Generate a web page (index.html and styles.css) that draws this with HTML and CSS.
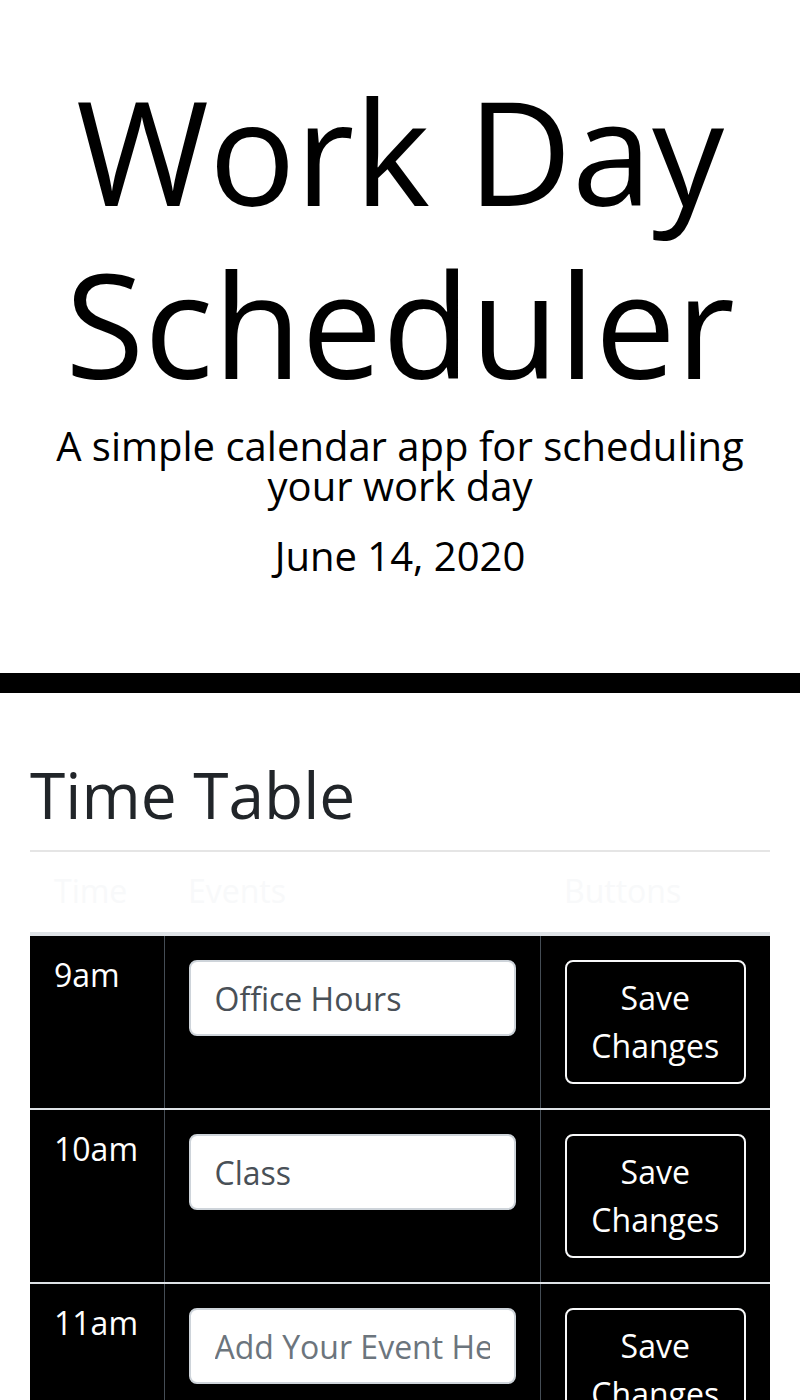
FILE: index.html
```html
<!DOCTYPE html>
<html lang="en">
<head>
<meta charset="utf-8">
<title>Work Day Scheduler</title>
<link rel="stylesheet" href="styles.css">
</head>
<body>
<header class="jumbotron">
  <h1 class="display-title">Work Day Scheduler</h1>
  <p class="lead">A simple calendar app for scheduling your work day</p>
  <p class="current-day">June 14, 2020</p>
</header>
<main class="container">
  <h2 class="section-title">Time Table</h2>
  <hr class="divider">
  <table class="schedule">
    <colgroup>
      <col class="col-time">
      <col class="col-events">
      <col class="col-buttons">
    </colgroup>
    <thead>
      <tr>
        <th>Time</th>
        <th>Events</th>
        <th>Buttons</th>
      </tr>
    </thead>
    <tbody>
      <tr>
        <td class="hour">9am</td>
        <td><input class="event-input" type="text" value="Office Hours" placeholder="Add Your Event Here"></td>
        <td><button class="save-btn" type="button">Save Changes</button></td>
      </tr>
      <tr>
        <td class="hour">10am</td>
        <td><input class="event-input" type="text" value="Class" placeholder="Add Your Event Here"></td>
        <td><button class="save-btn" type="button">Save Changes</button></td>
      </tr>
      <tr>
        <td class="hour">11am</td>
        <td><input class="event-input" type="text" value="" placeholder="Add Your Event Here"></td>
        <td><button class="save-btn" type="button">Save Changes</button></td>
      </tr>
      <tr>
        <td class="hour">12pm</td>
        <td><input class="event-input" type="text" value="" placeholder="Add Your Event Here"></td>
        <td><button class="save-btn" type="button">Save Changes</button></td>
      </tr>
    </tbody>
  </table>
</main>
</body>
</html>
```
FILE: styles.css
```css
* {
  box-sizing: border-box;
}

html, body {
  margin: 0;
  padding: 0;
}

body {
  font-family: "Open Sans", "Liberation Sans", sans-serif;
  font-size: 32px;
  line-height: 1.5;
  color: #212529;
  background: #ffffff;
}

.jumbotron {
  padding: 64px 32px 64px;
  margin-bottom: 64px;
  text-align: center;
  color: #000000;
  border-bottom: 20px solid #000000;
}

.display-title {
  margin: 0 0 16px;
  font-size: 144px;
  font-weight: 400;
  line-height: 1.2;
}

.lead {
  margin: 0 0 26px;
  font-size: 40px;
  font-weight: 400;
  line-height: 1;
}

.current-day {
  margin: 0 0 29px;
  font-size: 40px;
  font-weight: 400;
  line-height: 1.2;
}

.container {
  padding: 0 30px;
}

.section-title {
  margin: 0 0 17px;
  font-size: 64px;
  font-weight: 400;
  line-height: 1.2;
}

.divider {
  margin: 0;
  border: 0;
  border-top: 2px solid rgba(0, 0, 0, 0.1);
}

.schedule {
  width: 100%;
  table-layout: fixed;
  border-collapse: collapse;
}

.col-time { width: 134px; }
.col-events { width: 376px; }
.col-buttons { width: 230px; }

.schedule th {
  padding: 15px 24px 17px;
  text-align: left;
  font-weight: 400;
  color: #f8f9fa;
  border-bottom: 4px solid #dee2e6;
}

.schedule tbody tr {
  background: #000000;
  color: #ffffff;
  border-bottom: 2px solid #dee2e6;
}

.schedule td {
  padding: 24px;
  vertical-align: top;
  border-left: 1px solid #454d55;
}

.schedule td:first-child {
  border-left: 0;
}

.schedule td.hour {
  padding-top: 15px;
}

.event-input {
  display: block;
  width: 100%;
  height: 76px;
  padding: 12px 24px;
  font-family: inherit;
  font-size: 32px;
  line-height: 1.5;
  color: #495057;
  background: #ffffff;
  border: 2px solid #ced4da;
  border-radius: 8px;
}

.event-input::placeholder {
  color: #6c757d;
  opacity: 1;
}

.save-btn {
  display: block;
  width: 100%;
  padding: 12px 24px;
  font-family: inherit;
  font-size: 32px;
  line-height: 1.5;
  color: #ffffff;
  background: transparent;
  border: 2px solid #f8f9fa;
  border-radius: 8px;
  text-align: center;
}
```
